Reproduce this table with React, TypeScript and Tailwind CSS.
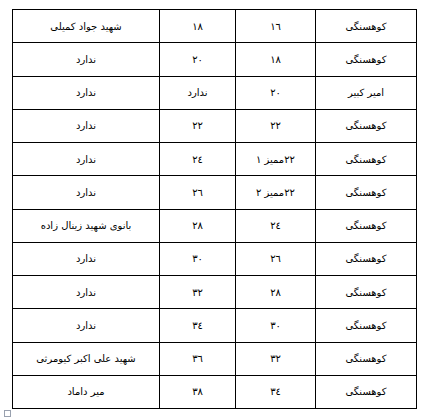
const rows: [string, string, string, string][] = [
  ['کوهسنگی', '١٦', '١٨', 'شهید جواد کمیلی'],
  ['کوهسنگی', '١٨', '٢٠', 'ندارد'],
  ['امیر کبیر', '٢٠', 'ندارد', 'ندارد'],
  ['کوهسنگی', '٢٢', '٢٢', 'ندارد'],
  ['کوهسنگی', '٢٢ممیز ١', '٢٤', 'ندارد'],
  ['کوهسنگی', '٢٢ممیز ٢', '٢٦', 'ندارد'],
  ['کوهسنگی', '٢٤', '٢٨', 'بانوی شهید زینال زاده'],
  ['کوهسنگی', '٢٦', '٣٠', 'ندارد'],
  ['کوهسنگی', '٢٨', '٣٢', 'ندارد'],
  ['کوهسنگی', '٣٠', '٣٤', 'ندارد'],
  ['کوهسنگی', '٣٢', '٣٦', 'شهید علی اکبر کیومرثی'],
  ['کوهسنگی', '٣٤', '٣٨', 'میر داماد'],
];

export default function App() {
  return (
    <div className="w-[423px] h-[420px] bg-white pt-[9px] font-['DejaVu_Sans',sans-serif] text-[10px] text-black">
      <table dir="rtl" className="ml-[12px] w-[404px] border-collapse table-fixed">
        <colgroup>
          <col className="w-[101px]" />
          <col className="w-[80px]" />
          <col className="w-[76px]" />
          <col className="w-[147px]" />
        </colgroup>
        <tbody>
          {rows.map((r, i) => (
            <tr key={i} className="h-[33.25px]">
              {r.map((c, j) => (
                <td key={j} className="border border-black text-center align-middle p-0 pt-[1px] leading-none">
                  {c}
                </td>
              ))}
            </tr>
          ))}
        </tbody>
      </table>
      {/* paragraph anchor mark */}
      <div className="ml-[4px] mt-[1px] w-[7px] h-[7px] border border-gray-400" />
    </div>
  );
}
